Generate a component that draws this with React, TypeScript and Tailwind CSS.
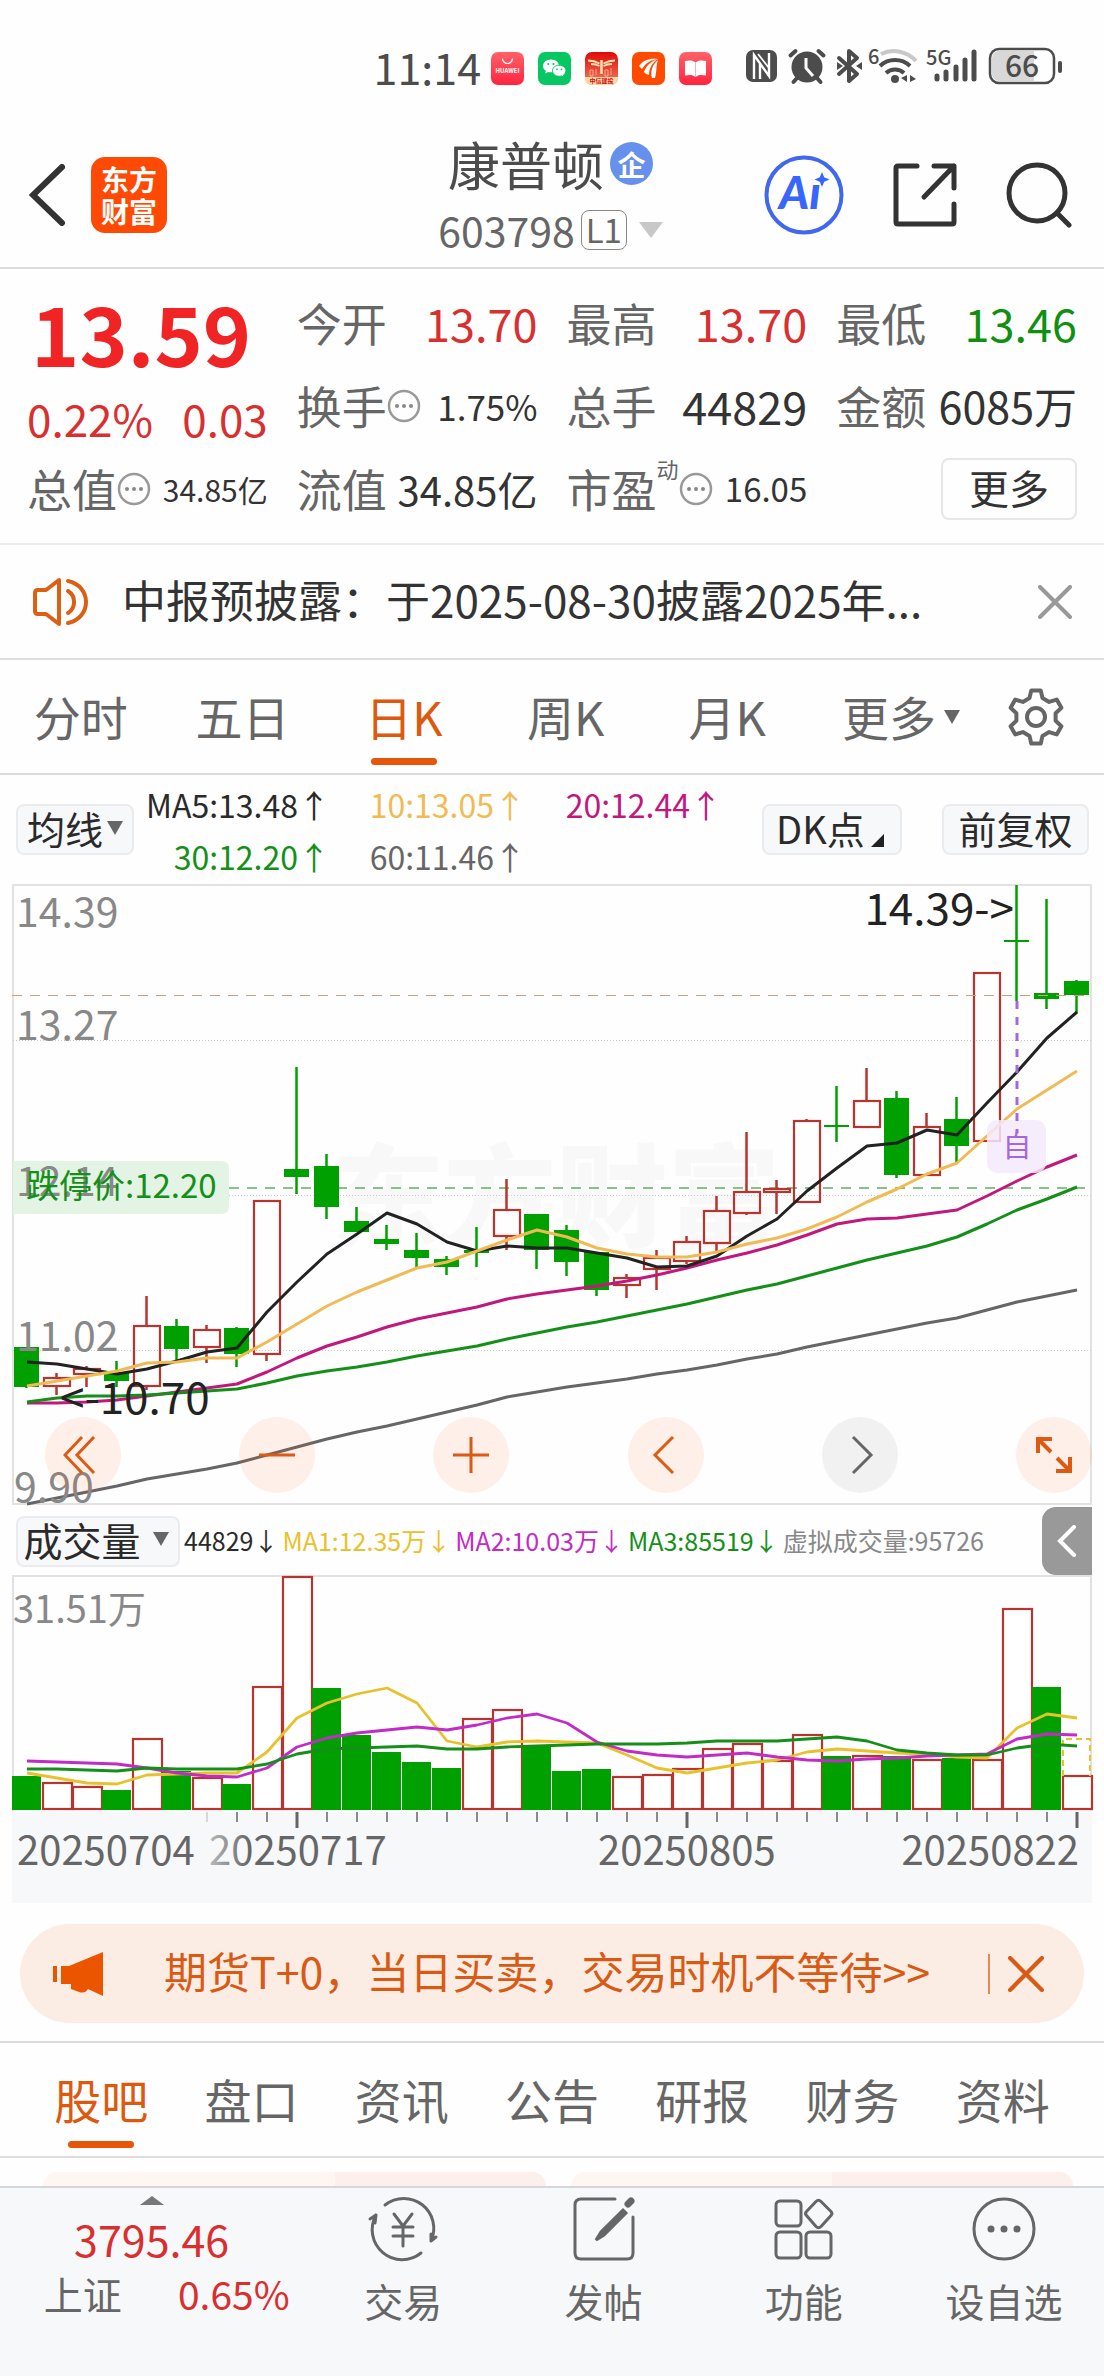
import React from "react";

/* ---------- data ---------- */

type Candle = [up: boolean, high: number, top: number, bottom: number, low: number];

const candles: Candle[] = [
  [false, 1348, 1348, 1388, 1389],
  [true, 1374, 1379, 1387, 1396],
  [true, 1367, 1370, 1375, 1388],
  [false, 1362, 1373, 1382, 1388],
  [true, 1297, 1327, 1387, 1391],
  [false, 1320, 1327, 1350, 1361],
  [true, 1326, 1331, 1348, 1364],
  [false, 1328, 1329, 1355, 1368],
  [true, 1202, 1202, 1355, 1362],
  [false, 1068, 1170, 1178, 1195],
  [false, 1155, 1167, 1208, 1220],
  [false, 1208, 1222, 1233, 1233],
  [false, 1226, 1240, 1245, 1251],
  [false, 1234, 1251, 1259, 1270],
  [false, 1257, 1260, 1268, 1276],
  [false, 1228, 1251, 1254, 1268],
  [true, 1180, 1211, 1237, 1251],
  [false, 1215, 1215, 1251, 1270],
  [false, 1226, 1231, 1263, 1277],
  [false, 1253, 1253, 1291, 1297],
  [true, 1275, 1279, 1286, 1299],
  [true, 1251, 1259, 1270, 1291],
  [true, 1237, 1243, 1262, 1265],
  [true, 1197, 1212, 1244, 1253],
  [true, 1133, 1193, 1214, 1216],
  [true, 1181, 1190, 1193, 1215],
  [true, 1120, 1122, 1203, 1203],
  [false, 1087, 1126, 1128, 1143],
  [true, 1069, 1102, 1128, 1128],
  [false, 1092, 1099, 1176, 1179],
  [true, 1114, 1128, 1176, 1176],
  [false, 1098, 1120, 1147, 1164],
  [true, 974, 974, 1142, 1142],
  [false, 886, 941, 943, 1002],
  [false, 900, 994, 1000, 1010],
  [false, 981, 982, 996, 1014],
];

const priceLines: { color: string; ys: number[] }[] = [
  {
    color: "#666666",
    ys: [1505, 1499, 1493, 1487, 1480, 1475, 1470, 1464, 1456, 1448, 1440, 1433, 1427, 1420, 1413, 1406, 1398, 1393, 1388, 1384, 1380, 1375, 1371, 1366, 1360, 1355, 1348, 1342, 1336, 1330, 1324, 1319, 1311, 1303, 1297, 1291],
  },
  {
    color: "#c0187c",
    ys: [1404, 1404, 1403, 1401, 1397, 1393, 1389, 1385, 1373, 1359, 1347, 1338, 1328, 1320, 1314, 1308, 1300, 1295, 1291, 1287, 1282, 1276, 1269, 1261, 1254, 1246, 1236, 1225, 1220, 1219, 1215, 1211, 1197, 1182, 1168, 1156],
  },
  {
    color: "#149018",
    ys: [1403, 1399, 1397, 1397, 1396, 1394, 1392, 1390, 1384, 1377, 1372, 1368, 1363, 1357, 1352, 1347, 1340, 1334, 1328, 1323, 1317, 1311, 1305, 1298, 1291, 1285, 1277, 1269, 1261, 1254, 1247, 1238, 1225, 1211, 1200, 1188],
  },
  {
    color: "#222222",
    ys: [1363, 1365, 1370, 1375, 1370, 1362, 1353, 1349, 1313, 1283, 1255, 1235, 1214, 1225, 1243, 1252, 1247, 1249, 1249, 1254, 1259, 1268, 1267, 1257, 1237, 1220, 1192, 1169, 1147, 1144, 1131, 1136, 1104, 1073, 1039, 1013],
  },
  {
    color: "#f0bb55",
    ys: [1387, 1382, 1377, 1372, 1364, 1363, 1359, 1359, 1343, 1325, 1307, 1293, 1281, 1269, 1263, 1252, 1241, 1231, 1238, 1249, 1255, 1258, 1258, 1253, 1245, 1239, 1230, 1218, 1203, 1190, 1175, 1164, 1137, 1110, 1091, 1072],
  },
];

const volumes: [up: boolean, top: number][] = [
  [false, 1776], [true, 1783], [true, 1787], [false, 1790], [true, 1739], [false, 1771],
  [true, 1778], [false, 1784], [true, 1687], [true, 1577], [false, 1688], [false, 1735],
  [false, 1752], [false, 1762], [false, 1768], [true, 1719], [true, 1710], [false, 1745],
  [false, 1771], [false, 1769], [true, 1777], [true, 1775], [true, 1769], [true, 1749],
  [true, 1744], [true, 1761], [true, 1735], [false, 1756], [true, 1756], [false, 1756],
  [true, 1760], [false, 1758], [true, 1760], [true, 1609], [false, 1687], [true, 1776],
];

const volumeLines: { color: string; ys: number[] }[] = [
  {
    color: "#e8c22c",
    ys: [1773, 1778, 1783, 1784, 1775, 1774, 1773, 1773, 1752, 1718, 1703, 1694, 1688, 1703, 1741, 1747, 1742, 1741, 1742, 1743, 1755, 1768, 1773, 1768, 1763, 1760, 1752, 1749, 1751, 1753, 1754, 1757, 1758, 1728, 1714, 1718],
  },
  {
    color: "#c22cc6",
    ys: [1761, 1762, 1763, 1764, 1768, 1773, 1776, 1777, 1768, 1747, 1738, 1733, 1730, 1727, 1730, 1725, 1718, 1714, 1723, 1742, 1751, 1755, 1757, 1755, 1753, 1757, 1760, 1761, 1759, 1758, 1756, 1755, 1754, 1739, 1734, 1735],
  },
  {
    color: "#149018",
    ys: [1769, 1769, 1770, 1771, 1768, 1769, 1769, 1769, 1764, 1754, 1749, 1748, 1747, 1746, 1749, 1749, 1747, 1746, 1745, 1744, 1744, 1744, 1743, 1741, 1741, 1741, 1739, 1737, 1741, 1750, 1753, 1755, 1755, 1748, 1744, 1746],
  },
];

const GREEN = "#00a000";
const RED = "#b8342f";

const toPoints = (ys: number[]) => ys.map((y, i) => `${27 + 30 * i},${y}`).join(" ");

/* ---------- small icons ---------- */

function DotsCircle() {
  return (
    <svg viewBox="0 0 34 34" className="h-[34px] w-[34px] shrink-0" aria-hidden="true">
      <circle cx="17" cy="17" r="15" fill="none" stroke="#999" strokeWidth="2.500" />
      <circle cx="10" cy="17" r="2" fill="#888" />
      <circle cx="17" cy="17" r="2" fill="#888" />
      <circle cx="24" cy="17" r="2" fill="#888" />
    </svg>
  );
}

function Triangle({ className }: { className: string }) {
  return (
    <svg viewBox="0 0 16 14" preserveAspectRatio="none" className={className} aria-hidden="true">
      <path d="M0 0h16L8 14z" fill="currentColor" />
    </svg>
  );
}

function gearPath() {
  const out: string[] = [];
  for (let k = 0; k < 6; k++) {
    const a = -90 + 60 * k;
    const pts: [number, number][] = [
      [a - 19, 20],
      [a - 10, 27],
      [a + 10, 27],
      [a + 19, 20],
    ];
    for (const [deg, r] of pts) {
      const t = (deg * Math.PI) / 180;
      out.push(`${(30 + r * Math.cos(t)).toFixed(1)} ${(30 + r * Math.sin(t)).toFixed(1)}`);
    }
  }
  return "M" + out.join("L") + "Z";
}

function GearIcon() {
  return (
    <svg viewBox="0 0 60 60" className="h-[60px] w-[60px]" fill="none" stroke="#666" strokeWidth="4" strokeLinejoin="round" aria-hidden="true">
      <path d={gearPath()} />
      <circle cx="30" cy="30" r="9" />
    </svg>
  );
}

function Cross({ className }: { className: string }) {
  return (
    <svg viewBox="0 0 34 34" className={className} fill="none" stroke="currentColor" strokeWidth="4" strokeLinecap="round" aria-hidden="true">
      <path d="M2 2l30 30M32 2L2 32" />
    </svg>
  );
}

/* ---------- status bar ---------- */

function StatusBar() {
  return (
    <div className="flex h-[122px] items-start justify-end pt-[46px] pr-10 text-[#4c4c4c]">
      <div className="flex h-11 items-center">
        <span className="pb-1 text-[43px] leading-[44px]">11:14</span>
        <div className="ml-2.5 flex gap-3.5">
          <svg viewBox="0 0 33 33" className="h-[33px] w-[33px] overflow-visible" aria-label="HUAWEI">
            <defs>
              <linearGradient id="hw" x1="0" y1="0" x2="0" y2="1">
                <stop offset="0" stopColor="#ff6268" />
                <stop offset="1" stopColor="#ff2440" />
              </linearGradient>
            </defs>
            <rect width="33" height="33" rx="7" fill="url(#hw)" />
            <path d="M11.500 6.500a5 5 0 0 0 10 0" fill="none" stroke="#fff" strokeWidth="1.200" />
            <text x="16.500" y="20.500" textAnchor="middle" fontSize="6" fontWeight="700" fill="#fff">HUAWEI</text>
          </svg>
          <svg viewBox="0 0 33 33" className="h-[33px] w-[33px]" aria-hidden="true">
            <rect width="33" height="33" rx="7" fill="#06c863" />
            <path d="M13 7.500c-4.500 0-8 2.800-8 6.400 0 2 1.100 3.700 2.900 4.900l-.8 2.600 3-1.500c.9.300 1.900.4 2.900.4 4.500 0 8-2.800 8-6.400s-3.500-6.400-8-6.400z" fill="#fff" />
            <path d="M21.200 13.200c-3.700 0-6.700 2.400-6.700 5.500s3 5.600 6.700 5.600c.8 0 1.600-.1 2.300-.3l2.500 1.300-.6-2.200c1.500-1 2.500-2.600 2.500-4.400 0-3.100-3-5.500-6.700-5.500z" fill="#fff" stroke="#06c863" strokeWidth="1" />
            <g fill="#06c863">
              <circle cx="10.300" cy="12" r="1.100" />
              <circle cx="15.500" cy="12" r="1.100" />
              <circle cx="19" cy="17.300" r=".9" />
              <circle cx="23.500" cy="17.300" r=".9" />
            </g>
          </svg>
          <svg viewBox="0 0 33 33" className="h-[33px] w-[33px] overflow-visible" aria-hidden="true">
            <defs>
              <linearGradient id="zx" x1="0" y1="0" x2="0" y2="1">
                <stop offset="0" stopColor="#e00808" />
                <stop offset="1" stopColor="#f08060" />
              </linearGradient>
              <clipPath id="zxc">
                <rect width="33" height="33" rx="7" />
              </clipPath>
            </defs>
            <g clipPath="url(#zxc)">
              <rect width="33" height="33" fill="url(#zx)" />
              <rect y="25" width="33" height="8" fill="#ffd9a8" />
              <g fill="none" stroke="#ffe3b0">
                <path d="M3 8.500c5 0 8 1 11.500 3M30 8.500c-5 0-8 1-11.500 3M6 12c3 0 6 .5 8.500 2M27 12c-3 0-6 .5-8.500 2" strokeWidth="1.800" />
                <path d="M16.500 8v14" strokeWidth="2.500" />
                <path d="M5 18v6h3v-6zM20 18v6h3v-6zM26 16v7M11 17v6" strokeWidth="1" opacity=".6" />
              </g>
            </g>
            <text x="16.500" y="31" textAnchor="middle" fontSize="6" fontWeight="700" fill="#d01010">中信建投</text>
          </svg>
          <svg viewBox="0 0 33 33" className="h-[33px] w-[33px]" aria-hidden="true">
            <rect width="33" height="33" rx="7" fill="#ff4a00" />
            <path d="M7 14c4-6 11-8 19-7-8 1-12 4-16 10-1-1-2-2-3-3zM12 20c2-6 7-11 14-13-6 4-9 9-9 16-2-.5-4-1.500-5-3zM20 26c-2-6 0-13 6-18-2 5-1 11-3 18z" fill="#fff" />
          </svg>
          <svg viewBox="0 0 33 33" className="h-[33px] w-[33px]" aria-hidden="true">
            <rect width="33" height="33" rx="7" fill="url(#hw)" />
            <path d="M6 9c4-1 8-1 10.500 1.500C19 8 23 8 27 9v14.500c-4-1-8-1-10.500 1.500C14 22.500 10 22.500 6 23.500z" fill="#fff" />
            <path d="M16.500 10.500V25" stroke="#ffb0b8" strokeWidth="1" />
          </svg>
        </div>
        <svg viewBox="0 0 318 40" className="mb-1 ml-[34px] h-10 w-[318px] overflow-visible" aria-hidden="true">
          <rect x="0" y="4" width="31" height="32" rx="7" fill="#4c4c4c" />
          <path d="M8 33V9l15 21V7M14 33V18" fill="none" stroke="#fff" strokeWidth="2.400" />
          <path d="M12 8l11 14" fill="none" stroke="#fff" strokeWidth="1.800" />
          <g fill="none" stroke="#4c4c4c">
            <circle cx="61" cy="21" r="15.500" fill="#4c4c4c" stroke="none" />
            <path d="M51 32l-3.500 4M71 32l3.500 4" strokeWidth="4" strokeLinecap="round" />
            <path d="M44.500 9.500l5-4.500M77.500 9.500l-5-4.500" strokeWidth="4" strokeLinecap="round" />
            <path d="M60 12v10l7 8" stroke="#fff" strokeWidth="3" />
            <path d="M93 12l18 16-8 7V5l8 7-18 16" strokeWidth="4" strokeLinejoin="round" strokeLinecap="round" />
            <path d="M91 16l6 4-6 4zM116 16l-6 4 6 4z" fill="#4c4c4c" stroke="none" />
            <path d="M135 8a30 30 0 0 1 35 7" stroke="#c8c8c8" strokeWidth="4" />
            <path d="M134 20a22 22 0 0 1 30 0" strokeWidth="4" />
            <path d="M140 27a13 13 0 0 1 18 0" strokeWidth="4" />
            <circle cx="149" cy="33" r="4" fill="#4c4c4c" stroke="none" />
            <path d="M161 29v7l-6-4zM164 36v-7l6 4z" fill="#4c4c4c" stroke="none" />
            <path d="M191 30v3M200 26v7M210 21v12M219 14v19M228 6v27" strokeWidth="5" strokeLinecap="round" />
            <rect x="244" y="3" width="64" height="34" rx="9" strokeWidth="2.500" />
            <path d="M253 5h35v30h-35a7 7 0 0 1-7-7V12a7 7 0 0 1 7-7z" fill="#d8d8d8" stroke="none" />
            <path d="M314 17v8" strokeWidth="4" strokeLinecap="round" />
          </g>
          <g fill="#4c4c4c" fontWeight="500">
            <text x="122" y="18" fontSize="20">6</text>
            <text x="180" y="19" fontSize="20">5G</text>
            <text x="276" y="31" fontSize="30" textAnchor="middle">66</text>
          </g>
        </svg>
      </div>
    </div>
  );
}

/* ---------- header ---------- */

function Header() {
  return (
    <header className="grid h-[147px] grid-cols-[1fr_auto_1fr] items-center border-b-2 border-[#dcdcdc] pr-8 pl-[29px]">
      <div className="flex items-center gap-[26px]">
        <button aria-label="返回">
          <svg viewBox="0 0 36 62" className="h-[62px] w-9" fill="none" stroke="#333" strokeWidth="6" strokeLinecap="round" aria-hidden="true">
            <path d="M33 3L4 31l29 28" />
          </svg>
        </button>
        <button className="h-[76px] w-[76px] rounded-[14px] bg-[#ff4a05] text-[28px] leading-[32px] font-bold text-white">
          东方
          <br />
          财富
        </button>
      </div>
      <div className="flex flex-col items-center pt-1">
        <div className="flex h-[66px] items-center gap-1.5">
          <h1 className="text-[52px] leading-[66px] text-[#4c4c4c]">康普顿</h1>
          <span className="flex h-[43px] w-[43px] items-center justify-center rounded-full bg-[#6790ec] text-[28px] leading-none font-bold text-white">企</span>
        </div>
        <button className="flex h-[66px] items-center text-[#666]">
          <span className="text-[41px] leading-none">603798</span>
          <span className="ml-1.5 flex h-10 w-[46px] items-center justify-center rounded-[8px] border border-[#888] text-[33px] leading-none">L1</span>
          <Triangle className="ml-3 h-4 w-6 text-[#c8c8c8]" />
        </button>
      </div>
      <div className="flex items-center justify-end gap-12">
        <button aria-label="Ai">
          <svg viewBox="0 0 80 80" className="h-20 w-20 overflow-visible" aria-hidden="true">
            <text x="15" y="54" fontSize="46" fontWeight="900" fontStyle="italic" fontFamily="Lato, sans-serif" fill="#3866fa">Ai</text>
            <path d="M49 12H68V30H46z" fill="#fefefe" />
            <circle cx="40" cy="40" r="37.500" fill="none" stroke="#3f68ec" strokeWidth="4" />
            <path d="M58 17l2.200 5.300 5.300 2.200-5.300 2.200-2.200 5.300-2.200-5.300-5.300-2.200 5.300-2.200z" fill="#3866fa" />
          </svg>
        </button>
        <button aria-label="分享">
          <svg viewBox="0 0 66 66" className="h-[66px] w-[66px]" fill="none" stroke="#333" strokeWidth="5" strokeLinecap="round" strokeLinejoin="round" aria-hidden="true">
            <path d="M25 4H6q-2 0-2 2v54q0 2 2 2h54q2 0 2-2V42" />
            <path d="M42 4h20v22M62 4L32 35" />
          </svg>
        </button>
        <button aria-label="搜索">
          <svg viewBox="0 0 66 66" className="h-[66px] w-[66px]" fill="none" stroke="#333" strokeWidth="5" strokeLinecap="round" aria-hidden="true">
            <circle cx="31" cy="31" r="28" />
            <path d="M51 51l12 12" />
          </svg>
        </button>
      </div>
    </header>
  );
}

/* ---------- quote ---------- */

function Cell({ label, extra, value, valueClass }: { label: string; extra?: React.ReactNode; value: string; valueClass: string }) {
  return (
    <div className="flex h-[83px] items-center justify-between whitespace-nowrap">
      <dt className="flex h-full items-center text-[45px] leading-none text-[#666]">
        {label}
        {extra}
      </dt>
      <dd className={valueClass}>{value}</dd>
    </div>
  );
}

function Quote() {
  return (
    <dl className="grid grid-cols-4 gap-x-[29px] border-b-2 border-[#ececec] px-[27px] pt-3 pb-[13px]">
      <div className="row-span-2 flex flex-col">
        <div className="flex h-[102px] items-center pl-1 text-[82px] leading-none font-bold text-[#f02424]">13.59</div>
        <div className="flex flex-1 items-center justify-between pt-1.5 text-[44px] leading-none text-[#d83030]">
          <span>0.22%</span>
          <span>0.03</span>
        </div>
      </div>
      <Cell label="今开" value="13.70" valueClass="text-[45px] leading-none text-[#d83030]" />
      <Cell label="最高" value="13.70" valueClass="text-[45px] leading-none text-[#d83030]" />
      <Cell label="最低" value="13.46" valueClass="text-[45px] leading-none text-[#109010]" />
      <Cell label="换手" extra={<DotsCircle />} value="1.75%" valueClass="text-[35px] leading-none text-[#333]" />
      <Cell label="总手" value="44829" valueClass="text-[45px] leading-none text-[#333]" />
      <Cell label="金额" value="6085万" valueClass="text-[43px] leading-none text-[#333]" />
      <Cell label="总值" extra={<DotsCircle />} value="34.85亿" valueClass="text-[30px] leading-none text-[#333]" />
      <Cell label="流值" value="34.85亿" valueClass="text-[40px] leading-none text-[#333]" />
      <Cell
        label="市盈"
        extra={
          <>
            <span className="self-start pt-2.5 text-[22px] leading-none">动</span>
            <DotsCircle />
          </>
        }
        value="16.05"
        valueClass="text-[33px] leading-none text-[#333]"
      />
      <div className="flex h-[83px] items-center justify-end">
        <button className="h-[62px] w-[136px] rounded-[8px] border-2 border-[#e6e6e6] pb-1 text-[40px] leading-none text-[#333]">更多</button>
      </div>
    </dl>
  );
}

function Notice() {
  return (
    <div className="flex h-[115px] items-center border-b-2 border-[#dcdcdc] pr-8 pl-8">
      <svg viewBox="0 0 58 50" className="h-[50px] w-[58px] shrink-0" fill="none" stroke="#dc5f14" strokeWidth="4" strokeLinejoin="round" strokeLinecap="round" aria-hidden="true">
        <path d="M27 3v44L14 37H6q-3 0-3-3V16q0-3 3-3h8z" />
        <path d="M36 14a13 13 0 0 1 0 22M36 4c24 5 24 37 0 42" />
      </svg>
      <p className="ml-8 flex-1 truncate pb-1.5 text-[44px] leading-[64px] text-[#333]">中报预披露：于2025-08-30披露2025年...</p>
      <button aria-label="关闭" className="text-[#999]">
        <Cross className="h-[34px] w-[34px]" />
      </button>
    </div>
  );
}

/* ---------- chart section ---------- */

function PeriodTabs() {
  const tabs = ["分时", "五日", "日K", "周K", "月K"];
  return (
    <nav className="flex h-[115px] border-b-2 border-[#dcdcdc] text-[47px] text-[#666]">
      {tabs.map((t) =>
        t === "日K" ? (
          <button key={t} className="relative flex-1 text-[#dc5a10]">
            {t}
            <span className="absolute bottom-2 left-1/2 h-[7px] w-[66px] -translate-x-1/2 rounded-full bg-[#e65508]" />
          </button>
        ) : (
          <button key={t} className="flex-1">
            {t}
          </button>
        ),
      )}
      <button className="flex w-[160px] items-center justify-end gap-2 pr-2 whitespace-nowrap">
        更多
        <Triangle className="h-3.5 w-4" />
      </button>
      <button aria-label="设置" className="flex w-[136px] items-center justify-center">
        <GearIcon />
      </button>
    </nav>
  );
}

function MaItem({ text, className }: { text: string; className: string }) {
  return <span className={className}>{text}↑</span>;
}

function Indicators() {
  return (
    <div className="flex h-[109px] items-center pr-[15px] pl-4">
      <button className="flex h-[51px] w-[118px] items-center justify-center gap-1 rounded-[8px] border-2 border-[#e9ebee] bg-[#f7f8fa] pb-1 text-[38px] leading-none whitespace-nowrap text-[#2a2a2a]">
        均线
        <Triangle className="h-3.5 w-4 text-[#666]" />
      </button>
      <div className="grid grid-cols-[196px_196px_196px] text-right text-[32px] leading-[52px] whitespace-nowrap">
        <MaItem text="MA5:13.48" className="text-[#2a2a2a]" />
        <MaItem text="10:13.05" className="text-[#f0bb55]" />
        <MaItem text="20:12.44" className="text-[#c0187c]" />
        <MaItem text="30:12.20" className="text-[#149018]" />
        <MaItem text="60:11.46" className="text-[#666]" />
      </div>
      <div className="ml-auto flex gap-10">
        <button className="flex h-[51px] w-[140px] items-center gap-1.5 rounded-[8px] border-2 border-[#e9ebee] bg-[#f7f8fa] pl-3 text-[38px] leading-none whitespace-nowrap text-[#2a2a2a]">
          <span className="pb-1">DK点</span>
          <svg viewBox="0 0 13 13" className="mb-1.5 h-[13px] w-[13px] self-end" aria-hidden="true">
            <path d="M13 0v13H0z" fill="#222" />
          </svg>
        </button>
        <button className="h-[51px] w-[147px] rounded-[8px] border-2 border-[#e9ebee] bg-[#f7f8fa] pb-1 text-[38px] leading-none whitespace-nowrap text-[#2a2a2a]">前复权</button>
      </div>
    </div>
  );
}

function CandleShape({ c, i }: { c: Candle; i: number }) {
  const [up, high, top, bottom, low] = c;
  const x = 26.5 + 30 * i;
  const color = up ? RED : GREEN;
  return (
    <g>
      {high < top && <path d={`M${x} ${high}V${top}`} stroke={color} strokeWidth="2.500" />}
      {low > bottom && <path d={`M${x} ${bottom}V${low}`} stroke={color} strokeWidth="2.500" />}
      {up ? (
        <rect x={x - 12.5} y={top} width="26" height={bottom - top} fill="none" stroke={color} strokeWidth="2.200" />
      ) : (
        <rect x={x - 12.5} y={top} width="25" height={bottom - top} fill={color} />
      )}
    </g>
  );
}

const circle = "flex h-[76px] w-[76px] items-center justify-center rounded-full bg-[#ff5a0a]/9";
const strokeIcon = "h-10 w-10";

function PriceChart() {
  return (
    <div className="relative">
      <svg viewBox="12 885 1080 621" className="block w-full overflow-visible" role="img" aria-label="日K线图">
        <text x="556" y="1240" fontSize="112" fontWeight="900" fill="#f8f8f8" textAnchor="middle">东方财富</text>
        <rect x="13" y="886" width="1078" height="619" fill="none" stroke="#e2e2e2" strokeWidth="2" />
        <g stroke="#cccccc" strokeWidth="1" strokeDasharray="1 2">
          <path d="M13 1041.500H1091M13 1196.500H1091M13 1351.500H1091" />
        </g>
        <path d="M229 1189H1091" stroke="#5fb05f" strokeWidth="1.500" strokeDasharray="10 8" />
        {candles.map((c, i) => (
          <CandleShape key={i} c={c} i={i} />
        ))}
        <path d="M12 996.500H1091" stroke="#c8a27c" strokeWidth="1.200" strokeDasharray="10 8" />
        {priceLines.map((l) => (
          <polyline key={l.color} points={toPoints(l.ys)} fill="none" stroke={l.color} strokeWidth="3" strokeLinejoin="round" />
        ))}
        <path d="M13 1162H221q8 0 8 8V1207q0 8-8 8H13z" fill="#e3f4e4" />
        <g fontSize="41" fill="#888">
          <text x="16" y="928">14.39</text>
          <text x="16" y="1041">13.27</text>
          <text x="16" y="1197">12.14</text>
          <text x="16" y="1352">11.02</text>
          <text x="14" y="1503">9.90</text>
        </g>
        <text x="26" y="1199" fontSize="33" fill="#149018">跌停价:12.20</text>
        <g fontSize="44" fill="#222">
          <text x="1014" y="926" textAnchor="end">14.39-&gt;</text>
          <text x="60" y="1415">&lt;-10.70</text>
        </g>
        <rect x="987" y="1121" width="59" height="53" rx="10" fill="#f3eafc" opacity=".85" />
        <path d="M1017 1002V1134" stroke="#a566e0" strokeWidth="3" strokeDasharray="8 8" />
        <text x="1017" y="1158" fontSize="29" fill="#a566e0" textAnchor="middle">自</text>
      </svg>
      <div className="absolute right-0 bottom-3 left-[33px] flex justify-between text-[#dc5a14]">
        <button aria-label="最左" className={circle}>
          <svg viewBox="0 0 40 40" className={strokeIcon} fill="none" stroke="currentColor" strokeWidth="3" aria-hidden="true">
            <path d="M19 2L2 20l17 18M31 2L14 20l17 18" />
          </svg>
        </button>
        <button aria-label="缩小" className={circle}>
          <svg viewBox="0 0 40 40" className={strokeIcon} fill="none" stroke="currentColor" strokeWidth="3" aria-hidden="true">
            <path d="M2 20h36" />
          </svg>
        </button>
        <button aria-label="放大" className={circle}>
          <svg viewBox="0 0 40 40" className={strokeIcon} fill="none" stroke="currentColor" strokeWidth="3" aria-hidden="true">
            <path d="M2 20h36M20 2v36" />
          </svg>
        </button>
        <button aria-label="左移" className={circle}>
          <svg viewBox="0 0 40 40" className={strokeIcon} fill="none" stroke="currentColor" strokeWidth="3" aria-hidden="true">
            <path d="M27 2L9 20l18 18" />
          </svg>
        </button>
        <button aria-label="右移" className="flex h-[76px] w-[76px] items-center justify-center rounded-full bg-black/5 text-[#666]">
          <svg viewBox="0 0 40 40" className={strokeIcon} fill="none" stroke="currentColor" strokeWidth="3" aria-hidden="true">
            <path d="M13 2l18 18-18 18" />
          </svg>
        </button>
        <button aria-label="全屏" className={circle}>
          <svg viewBox="0 0 40 40" className={strokeIcon} fill="none" stroke="currentColor" strokeWidth="4" aria-hidden="true">
            <path d="M4 18V4h14M4 4l13 13M36 22v14H22M36 36L23 23" />
          </svg>
        </button>
      </div>
    </div>
  );
}

function VolumeHeader() {
  return (
    <div className="flex h-[70px] items-center gap-1 pt-0.5 pl-1 text-[25px] whitespace-nowrap">
      <button className="flex h-[51px] w-[164px] shrink-0 items-center justify-center gap-3 rounded-[8px] border-2 border-[#e9ebee] bg-[#f7f8fa] pr-1 pb-1 text-[39px] leading-none text-[#2a2a2a]">
        成交量
        <Triangle className="h-3.5 w-4 text-[#666]" />
      </button>
      <span className="text-[#2a2a2a]">44829↓</span>
      <span className="text-[#e8c22c]">MA1:12.35万↓</span>
      <span className="text-[#c22cc6]">MA2:10.03万↓</span>
      <span className="text-[#149018]">MA3:85519↓</span>
      <span className="text-[#888]">虚拟成交量:95726</span>
      <button aria-label="展开" className="ml-auto flex h-[68px] w-[50px] items-center justify-center rounded-l-[14px] bg-[#999]">
        <svg viewBox="0 0 20 32" className="h-8 w-5" fill="none" stroke="#fff" strokeWidth="4" strokeLinecap="round" aria-hidden="true">
          <path d="M17 2L3 16l14 14" />
        </svg>
      </button>
    </div>
  );
}

function VolumeChart() {
  const ticks = Array.from({ length: 30 }, (_, k) => k + 6);
  return (
    <svg viewBox="12 1575 1080 328" className="block w-full overflow-visible" role="img" aria-label="成交量图">
      <defs>
        <linearGradient id="fade" gradientUnits="userSpaceOnUse" x1="200" x2="250" y1="0" y2="0">
          <stop offset="0" stopColor="#666" stopOpacity=".3" />
          <stop offset="1" stopColor="#666" />
        </linearGradient>
      </defs>
      <rect x="12" y="1811" width="1080" height="92" fill="#f7f8fa" />
      <path d="M13 1811V1576H1091V1811" fill="none" stroke="#e2e2e2" strokeWidth="2" />
      <text x="13" y="1623" fontSize="38" fill="#888">31.51万</text>
      {volumes.map(([up, top], i) =>
        up ? (
          <rect key={i} x={13 + 30 * i} y={top} width="29" height={1809 - top} fill="#fff" stroke={RED} strokeWidth="2.200" />
        ) : (
          <rect key={i} x={12 + 30 * i} y={top} width="29" height={1810 - top} fill={GREEN} />
        ),
      )}
      <path d="M1063 1776V1739H1090V1776" fill="none" stroke="#e8c22c" strokeWidth="2" strokeDasharray="6 4" />
      {volumeLines.map((l) => (
        <polyline key={l.color} points={toPoints(l.ys)} fill="none" stroke={l.color} strokeWidth="2.800" strokeLinejoin="round" />
      ))}
      {ticks.map((i) => {
        const major = i === 9 || i === 22 || i === 35;
        return <path key={i} d={`M${27 + 30 * i} 1812V${major ? 1828 : 1822}`} stroke={i === 6 ? "#ccc" : "#666"} strokeWidth={major ? 3 : 1.5} />;
      })}
      <g fontSize="40" fill="#666">
        <text x="17" y="1865">20250704</text>
        <text x="209" y="1865" fill="url(#fade)">20250717</text>
        <text x="598" y="1865">20250805</text>
        <text x="1079" y="1865" textAnchor="end">20250822</text>
      </g>
    </svg>
  );
}

/* ---------- lower sections ---------- */

function Promo() {
  return (
    <div className="px-5 pt-[21px] pb-[18px]">
      <div className="flex h-[99px] items-center rounded-full bg-[#fcede4] pr-10 pl-8 text-[#d85a14]">
        <svg viewBox="0 0 52 44" className="h-11 w-[52px] shrink-0" fill="#ec5500" aria-hidden="true">
          <path d="M1 14h4v16H1zM9 14h8L51 0v44L36 37q-3 5-9 3l-8-3v-5H9z" />
        </svg>
        <a href="#promo" className="ml-[60px] flex-1 pb-2 text-[43px] leading-[60px] whitespace-nowrap">
          期货T+0，当日买卖，交易时机不等待&gt;&gt;
        </a>
        <span className="h-10 w-0.5 bg-[#e08a5a]" />
        <button aria-label="关闭广告" className="ml-[18px]">
          <Cross className="h-9 w-9" />
        </button>
      </div>
    </div>
  );
}

function InfoTabs() {
  const tabs = ["股吧", "盘口", "资讯", "公告", "研报", "财务", "资料"];
  return (
    <nav className="flex h-[117px] border-y-2 border-[#dcdce0] px-[26px] text-[47px] text-[#666]">
      {tabs.map((t, i) =>
        i === 0 ? (
          <button key={t} className="relative flex-1 text-[#dc5a10]">
            {t}
            <span className="absolute bottom-2 left-1/2 h-[7px] w-[66px] -translate-x-1/2 rounded-full bg-[#e65508]" />
          </button>
        ) : (
          <button key={t} className="flex-1">
            {t}
          </button>
        ),
      )}
    </nav>
  );
}

const navIcon = "h-[66px] w-[66px]";

const navItems: { label: string; icon: React.ReactNode }[] = [
  {
    label: "交易",
    icon: (
      <svg viewBox="0 0 72 66" className="h-[66px] w-[72px]" fill="none" stroke="#666" strokeWidth="3" strokeLinecap="round" strokeLinejoin="round" aria-hidden="true">
        <path d="M18 9a30 30 0 0 1 46 36M64 45l5-4M64 45l0-7" />
        <path d="M54 57A30 30 0 0 1 9 19M9 19l-6 4M9 19l-1 8" />
        <path d="M27 18l9 12 9-12M36 30v20M26 31h20M26 40h20" />
      </svg>
    ),
  },
  {
    label: "发帖",
    icon: (
      <svg viewBox="0 0 66 66" className={navIcon} fill="none" stroke="#666" strokeWidth="3" strokeLinecap="round" aria-hidden="true">
        <path d="M44 3H10q-6 0-6 6v48q0 6 6 6h46q6 0 6-6V21" />
        <path d="M52 14L30 36l-5 8 8-5 22-22z" fill="#666" />
        <path d="M57 8l3-3" strokeWidth="7" />
      </svg>
    ),
  },
  {
    label: "功能",
    icon: (
      <svg viewBox="0 0 66 66" className={navIcon} fill="none" stroke="#666" strokeWidth="3" strokeLinejoin="round" aria-hidden="true">
        <rect x="5" y="5" width="25" height="25" rx="4" />
        <rect x="5" y="36" width="25" height="26" rx="4" />
        <rect x="35" y="36" width="25" height="26" rx="4" />
        <path d="M45 5.500q2.500-2.500 5 0L60 15.500q2 2 0 4L50 30.500q-2.500 2.500-5 0L35.500 19.500q-2-2 0-4z" />
      </svg>
    ),
  },
  {
    label: "设自选",
    icon: (
      <svg viewBox="0 0 66 66" className={navIcon} fill="none" stroke="#666" strokeWidth="3" aria-hidden="true">
        <circle cx="33" cy="33" r="30" />
        <g fill="#666" stroke="none">
          <circle cx="20" cy="33" r="3.500" />
          <circle cx="33" cy="33" r="3.500" />
          <circle cx="46" cy="33" r="3.500" />
        </g>
      </svg>
    ),
  },
];

function BottomBar() {
  return (
    <footer className="grid flex-1 grid-cols-[303fr_200fr_200fr_200fr_200fr] items-start border-t-2 border-[#d4d6da] bg-[#f7f8fa] pb-16">
      <button className="flex flex-col items-center pt-2 text-[#d83030]">
        <svg viewBox="0 0 24 9" className="h-[9px] w-6" aria-hidden="true">
          <path d="M12 0l12 9H0z" fill="#777" />
        </svg>
        <span className="mt-1 text-[43px] leading-[58px]">3795.46</span>
        <span className="flex w-[276px] items-center justify-between pl-[30px] text-[39px] leading-[52px]">
          <span className="text-[#666]">上证</span>
          <span>0.65%</span>
        </span>
      </button>
      {navItems.map((n) => (
        <button key={n.label} className="flex flex-col items-center pt-2">
          {n.icon}
          <span className="mt-3 text-[39px] leading-[52px] text-[#666]">{n.label}</span>
        </button>
      ))}
    </footer>
  );
}

export default function App() {
  return (
    <div className="flex min-h-screen flex-col overflow-hidden bg-[#fefefe] font-['Noto_Sans_CJK_SC',sans-serif]">
      <StatusBar />
      <Header />
      <Quote />
      <Notice />
      <PeriodTabs />
      <Indicators />
      <section className="px-3">
        <PriceChart />
        <VolumeHeader />
        <VolumeChart />
      </section>
      <Promo />
      <InfoTabs />
      <div className="flex gap-[25px] pt-3.5 pr-[31px] pl-[43px]">
        <div className="h-[14px] flex-1 rounded-t-[24px] bg-linear-to-r from-[#fef6f2] from-58% to-[#fdefec] to-58%" />
        <div className="h-[14px] flex-1 rounded-t-[24px] bg-linear-to-r from-[#fef6f2] from-52% to-[#fdefec] to-52%" />
      </div>
      <BottomBar />
    </div>
  );
}
